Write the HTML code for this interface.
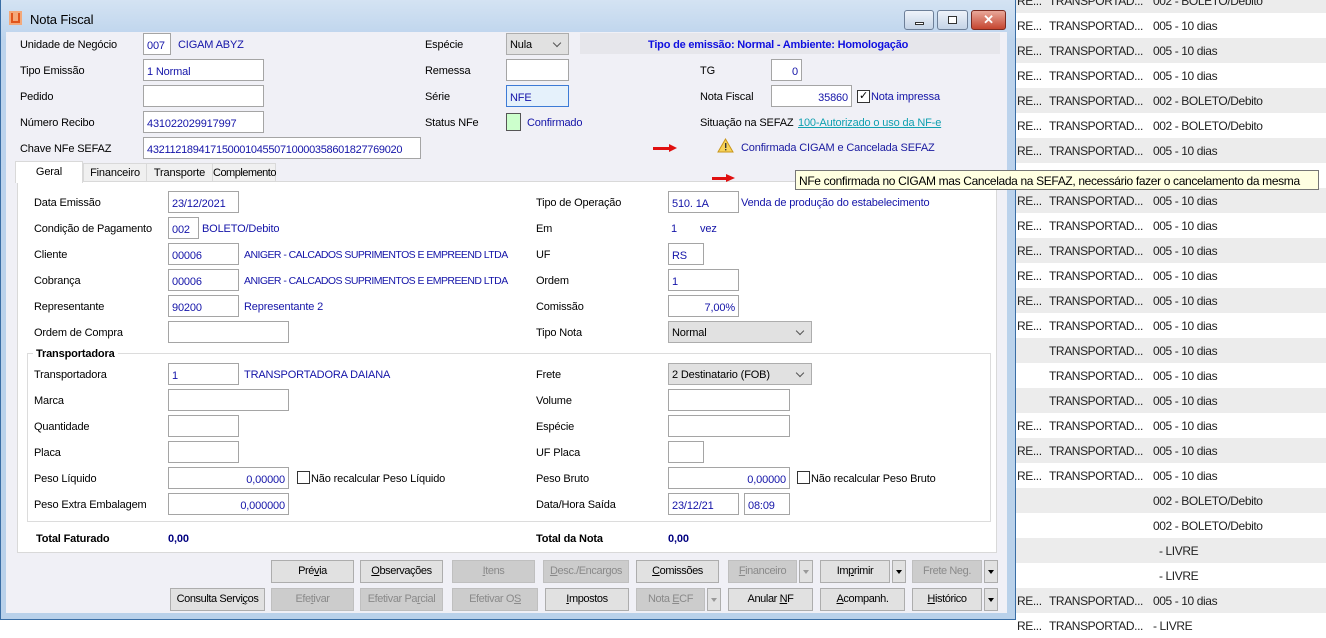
<!DOCTYPE html>
<html><head><meta charset="utf-8"><style>
*{box-sizing:border-box;margin:0;padding:0}
body{width:1326px;height:624px;overflow:hidden;background:#fff;font-family:"Liberation Sans",sans-serif;font-size:11px;color:#000;position:relative;letter-spacing:-0.15px}
.a{position:absolute;white-space:nowrap}
.row{position:absolute;left:1015px;width:311px;height:25px}
.g{background:#ececec}
.t{position:absolute;font-size:12px;color:#222;top:6px;letter-spacing:-0.4px}
.l{position:absolute;white-space:nowrap;line-height:14px;margin-top:1px}
.i{position:absolute;background:#fff;border:1px solid #a5a5a5;height:22px;color:#1414a8;padding:6px 3px 0 3px;line-height:13px;white-space:nowrap}
.r{text-align:right}
.b{color:#1414a8}
.n{letter-spacing:-0.55px}
.sel{position:absolute;background:#e1e1e1;border:1px solid #adadad;height:22px;padding:5px 3px;line-height:13px}
.sel:after{content:"";position:absolute;right:8px;top:6px;width:5px;height:5px;border-right:1px solid #555;border-bottom:1px solid #555;transform:rotate(45deg)}
.btn{position:absolute;height:23px;background:#e1e1e1;border:1px solid #adadad;text-align:center;line-height:21px;letter-spacing:-0.4px}
.dis{background:#cccccc;border-color:#bfbfbf;color:#8a8a8a}
.arr{position:absolute;height:23px;width:14px;background:#e1e1e1;border:1px solid #adadad}
.arr:after{content:"";position:absolute;left:3px;top:9px;border-left:3px solid transparent;border-right:3px solid transparent;border-top:4px solid #000}
.arr.dis:after{border-top-color:#999}
.cb{position:absolute;width:13px;height:13px;border:1px solid #333;background:#fff}
</style></head><body>
<!-- background list -->
<div class="row g" style="top:-12px"><span class="t" style="left:2px">RE...</span><span class="t" style="left:34px">TRANSPORTAD...</span><span class="t" style="left:138px">002 - BOLETO/Debito</span></div>
<div class="row" style="top:13px"><span class="t" style="left:2px">RE...</span><span class="t" style="left:34px">TRANSPORTAD...</span><span class="t" style="left:138px">005 - 10 dias</span></div>
<div class="row g" style="top:38px"><span class="t" style="left:2px">RE...</span><span class="t" style="left:34px">TRANSPORTAD...</span><span class="t" style="left:138px">005 - 10 dias</span></div>
<div class="row" style="top:63px"><span class="t" style="left:2px">RE...</span><span class="t" style="left:34px">TRANSPORTAD...</span><span class="t" style="left:138px">005 - 10 dias</span></div>
<div class="row g" style="top:88px"><span class="t" style="left:2px">RE...</span><span class="t" style="left:34px">TRANSPORTAD...</span><span class="t" style="left:138px">002 - BOLETO/Debito</span></div>
<div class="row" style="top:113px"><span class="t" style="left:2px">RE...</span><span class="t" style="left:34px">TRANSPORTAD...</span><span class="t" style="left:138px">002 - BOLETO/Debito</span></div>
<div class="row g" style="top:138px"><span class="t" style="left:2px">RE...</span><span class="t" style="left:34px">TRANSPORTAD...</span><span class="t" style="left:138px">005 - 10 dias</span></div>
<div class="row" style="top:163px"></div>
<div class="row g" style="top:188px"><span class="t" style="left:2px">RE...</span><span class="t" style="left:34px">TRANSPORTAD...</span><span class="t" style="left:138px">005 - 10 dias</span></div>
<div class="row" style="top:213px"><span class="t" style="left:2px">RE...</span><span class="t" style="left:34px">TRANSPORTAD...</span><span class="t" style="left:138px">005 - 10 dias</span></div>
<div class="row g" style="top:238px"><span class="t" style="left:2px">RE...</span><span class="t" style="left:34px">TRANSPORTAD...</span><span class="t" style="left:138px">005 - 10 dias</span></div>
<div class="row" style="top:263px"><span class="t" style="left:2px">RE...</span><span class="t" style="left:34px">TRANSPORTAD...</span><span class="t" style="left:138px">005 - 10 dias</span></div>
<div class="row g" style="top:288px"><span class="t" style="left:2px">RE...</span><span class="t" style="left:34px">TRANSPORTAD...</span><span class="t" style="left:138px">005 - 10 dias</span></div>
<div class="row" style="top:313px"><span class="t" style="left:2px">RE...</span><span class="t" style="left:34px">TRANSPORTAD...</span><span class="t" style="left:138px">005 - 10 dias</span></div>
<div class="row g" style="top:338px"><span class="t" style="left:34px">TRANSPORTAD...</span><span class="t" style="left:138px">005 - 10 dias</span></div>
<div class="row" style="top:363px"><span class="t" style="left:34px">TRANSPORTAD...</span><span class="t" style="left:138px">005 - 10 dias</span></div>
<div class="row g" style="top:388px"><span class="t" style="left:34px">TRANSPORTAD...</span><span class="t" style="left:138px">005 - 10 dias</span></div>
<div class="row" style="top:413px"><span class="t" style="left:2px">RE...</span><span class="t" style="left:34px">TRANSPORTAD...</span><span class="t" style="left:138px">005 - 10 dias</span></div>
<div class="row g" style="top:438px"><span class="t" style="left:2px">RE...</span><span class="t" style="left:34px">TRANSPORTAD...</span><span class="t" style="left:138px">005 - 10 dias</span></div>
<div class="row" style="top:463px"><span class="t" style="left:2px">RE...</span><span class="t" style="left:34px">TRANSPORTAD...</span><span class="t" style="left:138px">005 - 10 dias</span></div>
<div class="row g" style="top:488px"><span class="t" style="left:138px">002 - BOLETO/Debito</span></div>
<div class="row" style="top:513px"><span class="t" style="left:138px">002 - BOLETO/Debito</span></div>
<div class="row g" style="top:538px"><span class="t" style="left:144px">- LIVRE</span></div>
<div class="row" style="top:563px"><span class="t" style="left:144px">- LIVRE</span></div>
<div class="row g" style="top:588px"><span class="t" style="left:2px">RE...</span><span class="t" style="left:34px">TRANSPORTAD...</span><span class="t" style="left:138px">005 - 10 dias</span></div>
<div class="row" style="top:613px"><span class="t" style="left:2px">RE...</span><span class="t" style="left:34px">TRANSPORTAD...</span><span class="t" style="left:138px">- LIVRE</span></div>
<div class="a" style="left:0;top:619px;width:1015px;height:5px;background:#fff;border-top:1px solid #222"></div>

<!-- window -->
<div class="a" style="left:0;top:0;width:1016px;height:620px;background:linear-gradient(#d4e3f3,#bcd3ec 40px,#b9d1ea);border:1px solid #3a6ea5;border-top:none"></div>
<div class="a" style="left:9px;top:11px;width:13px;height:14px;background:#f3a87a"></div>
<div class="a" style="left:11px;top:13px;width:9px;height:10px;border:2px solid #e0541c;border-top:none"></div>
<div class="a" style="left:30px;top:12px;font-size:13px;color:#000">Nota Fiscal</div>
<div class="a" style="left:904px;top:10px;width:30px;height:20px;border:1px solid #6d7f98;border-radius:3px;background:linear-gradient(#eef3fa,#c4d3e6)"><div class="a" style="left:10px;top:11px;width:9px;height:3px;border:1px solid #333;background:#fff"></div></div>
<div class="a" style="left:937px;top:10px;width:31px;height:20px;border:1px solid #6d7f98;border-radius:3px;background:linear-gradient(#eef3fa,#c4d3e6)"><div class="a" style="left:10px;top:5px;width:9px;height:8px;border:1px solid #333;background:#fff"></div></div>
<div class="a" style="left:971px;top:10px;width:35px;height:20px;border:1px solid #7a2a20;border-radius:3px;background:linear-gradient(#e9a89a,#c5452f);color:#fff;font-weight:bold;font-size:13px;text-align:center;line-height:18px">✕</div>

<div class="a" style="left:6px;top:32px;width:1001px;height:581px;background:#f0f0f6"></div>
<!-- header -->
<span class="l" style="left:20px;top:37px">Unidade de Negócio</span>
<div class="i" style="left:143px;top:33px;width:28px">007</div><span class="l b" style="left:178px;top:37px">CIGAM ABYZ</span>
<span class="l" style="left:20px;top:63px">Tipo Emissão</span>
<div class="i" style="left:143px;top:59px;width:121px">1 Normal</div>
<span class="l" style="left:20px;top:89px">Pedido</span>
<div class="i" style="left:143px;top:85px;width:121px"></div>
<span class="l" style="left:20px;top:115px">Número Recibo</span>
<div class="i" style="left:143px;top:111px;width:121px">431022029917997</div>
<span class="l" style="left:20px;top:141px">Chave NFe SEFAZ</span>
<div class="i" style="left:143px;top:137px;width:278px;letter-spacing:-0.3px">43211218941715000104550710000358601827769020</div>

<span class="l" style="left:425px;top:37px">Espécie</span>
<div class="sel" style="left:506px;top:33px;width:63px">Nula</div>
<span class="l" style="left:425px;top:63px">Remessa</span>
<div class="i" style="left:506px;top:59px;width:63px"></div>
<span class="l" style="left:425px;top:89px">Série</span>
<div class="i" style="left:506px;top:85px;width:63px;background:#e5f1fb;border-color:#3d7bd6;color:#1414a8">NFE</div>
<span class="l" style="left:425px;top:115px">Status NFe</span>
<div class="a" style="left:506px;top:113px;width:15px;height:18px;background:#ccffcc;border:1px solid #555"></div>
<span class="l b" style="left:527px;top:115px">Confirmado</span>

<div class="a" style="left:580px;top:33px;width:420px;height:21px;background:#e6e6eb"></div>
<span class="l" style="left:648px;top:37px;color:#1010e0;font-weight:bold;letter-spacing:-0.2px">Tipo de emissão: Normal - Ambiente: Homologação</span>
<span class="l" style="left:700px;top:63px">TG</span>
<div class="i r" style="left:771px;top:59px;width:31px">0</div>
<span class="l" style="left:700px;top:89px">Nota Fiscal</span>
<div class="i r" style="left:771px;top:85px;width:81px">35860</div>
<div class="cb" style="left:857px;top:90px;text-align:center;line-height:10px;font-size:11px">✓</div>
<span class="l b" style="left:871px;top:89px">Nota impressa</span>
<span class="l" style="left:700px;top:115px">Situação na SEFAZ</span>
<span class="l" style="left:798px;top:115px;color:#10a0b0;text-decoration:underline">100-Autorizado o uso da NF-e</span>
<div class="a" style="left:653px;top:147px;width:18px;height:3px;background:#e01010"></div>
<div class="a" style="left:669px;top:144px;border-left:8px solid #e01010;border-top:4px solid transparent;border-bottom:4px solid transparent"></div>
<svg class="a" style="left:717px;top:138px" width="17" height="15"><path d="M8.5 1 L16 14 L1 14 Z" fill="#f7d35a" stroke="#c9961a"/><rect x="8" y="5" width="1.4" height="5" fill="#333"/><rect x="8" y="11" width="1.4" height="1.4" fill="#333"/></svg>
<span class="l" style="left:741px;top:140px;color:#1a1aa0">Confirmada CIGAM e Cancelada SEFAZ</span>

<!-- tabs -->
<div class="a" style="left:17px;top:181px;width:980px;height:372px;background:#fff;border:1px solid #d9d9d9"></div>
<div class="a" style="left:83px;top:163px;width:64px;height:19px;background:#f0f0f0;border:1px solid #d9d9d9;text-align:center;line-height:18px">Financeiro</div>
<div class="a" style="left:146px;top:163px;width:67px;height:19px;background:#f0f0f0;border:1px solid #d9d9d9;text-align:center;line-height:18px">Transporte</div>
<div class="a" style="left:212px;top:163px;width:64px;height:19px;background:#f0f0f0;border:1px solid #d9d9d9;text-align:center;line-height:18px;letter-spacing:-0.5px">Complemento</div>
<div class="a" style="left:15px;top:161px;width:68px;height:22px;background:#fff;border:1px solid #d9d9d9;border-bottom:none;text-align:center;line-height:20px">Geral</div>

<!-- left form -->
<span class="l" style="left:34px;top:195px">Data Emissão</span><div class="i" style="left:168px;top:191px;width:71px">23/12/2021</div>
<span class="l" style="left:34px;top:221px">Condição de Pagamento</span><div class="i" style="left:168px;top:217px;width:31px">002</div><span class="l b" style="left:202px;top:221px">BOLETO/Debito</span>
<span class="l" style="left:34px;top:247px">Cliente</span><div class="i" style="left:168px;top:243px;width:71px">00006</div><span class="l b n" style="left:244px;top:247px;font-size:10.5px">ANIGER - CALCADOS SUPRIMENTOS E EMPREEND LTDA</span>
<span class="l" style="left:34px;top:273px">Cobrança</span><div class="i" style="left:168px;top:269px;width:71px">00006</div><span class="l b n" style="left:244px;top:273px;font-size:10.5px">ANIGER - CALCADOS SUPRIMENTOS E EMPREEND LTDA</span>
<span class="l" style="left:34px;top:299px">Representante</span><div class="i" style="left:168px;top:295px;width:71px">90200</div><span class="l b" style="left:244px;top:299px">Representante 2</span>
<span class="l" style="left:34px;top:325px">Ordem de Compra</span><div class="i" style="left:168px;top:321px;width:121px"></div>

<span class="l" style="left:536px;top:195px">Tipo de Operação</span><div class="i" style="left:668px;top:191px;width:71px">510. 1A</div><span class="l b" style="left:741px;top:195px">Venda de produção do estabelecimento</span>
<span class="l" style="left:536px;top:221px">Em</span><span class="l b" style="left:671px;top:221px">1</span><span class="l b" style="left:700px;top:221px">vez</span>
<span class="l" style="left:536px;top:247px">UF</span><div class="i" style="left:668px;top:243px;width:36px">RS</div>
<span class="l" style="left:536px;top:273px">Ordem</span><div class="i" style="left:668px;top:269px;width:71px">1</div>
<span class="l" style="left:536px;top:299px">Comissão</span><div class="i r" style="left:668px;top:295px;width:71px">7,00%</div>
<span class="l" style="left:536px;top:325px">Tipo Nota</span><div class="sel" style="left:668px;top:321px;width:144px">Normal</div>

<!-- group -->
<div class="a" style="left:27px;top:353px;width:964px;height:169px;border:1px solid #dcdcdc"></div>
<span class="l" style="left:33px;top:346px;background:#fff;padding:0 3px;font-weight:bold">Transportadora</span>
<span class="l" style="left:34px;top:367px">Transportadora</span><div class="i" style="left:168px;top:363px;width:71px">1</div><span class="l b" style="left:244px;top:367px">TRANSPORTADORA DAIANA</span>
<span class="l" style="left:34px;top:393px">Marca</span><div class="i" style="left:168px;top:389px;width:121px"></div>
<span class="l" style="left:34px;top:419px">Quantidade</span><div class="i" style="left:168px;top:415px;width:71px"></div>
<span class="l" style="left:34px;top:445px">Placa</span><div class="i" style="left:168px;top:441px;width:71px"></div>
<span class="l" style="left:34px;top:471px">Peso Líquido</span><div class="i r" style="left:168px;top:467px;width:121px">0,00000</div><div class="cb" style="left:297px;top:471px"></div><span class="l" style="left:311px;top:471px">Não recalcular Peso Líquido</span>
<span class="l" style="left:34px;top:497px">Peso Extra Embalagem</span><div class="i r" style="left:168px;top:493px;width:121px">0,000000</div>

<span class="l" style="left:536px;top:367px">Frete</span><div class="sel" style="left:668px;top:363px;width:144px">2 Destinatario (FOB)</div>
<span class="l" style="left:536px;top:393px">Volume</span><div class="i" style="left:668px;top:389px;width:122px"></div>
<span class="l" style="left:536px;top:419px">Espécie</span><div class="i" style="left:668px;top:415px;width:122px"></div>
<span class="l" style="left:536px;top:445px">UF Placa</span><div class="i" style="left:668px;top:441px;width:36px"></div>
<span class="l" style="left:536px;top:471px">Peso Bruto</span><div class="i r" style="left:668px;top:467px;width:122px">0,00000</div><div class="cb" style="left:797px;top:471px"></div><span class="l" style="left:811px;top:471px">Não recalcular Peso Bruto</span>
<span class="l" style="left:536px;top:497px">Data/Hora Saída</span><div class="i" style="left:668px;top:493px;width:71px">23/12/21</div><div class="i" style="left:744px;top:493px;width:46px">08:09</div>

<span class="l" style="left:36px;top:531px;font-weight:bold">Total Faturado</span><span class="l" style="left:168px;top:531px;font-weight:bold;color:#000080">0,00</span>
<span class="l" style="left:536px;top:531px;font-weight:bold">Total da Nota</span><span class="l" style="left:668px;top:531px;font-weight:bold;color:#000080">0,00</span>

<!-- buttons -->
<div class="btn" style="left:271px;top:560px;width:83px">Pré<u>v</u>ia</div>
<div class="btn" style="left:360px;top:560px;width:83px"><u>O</u>bservações</div>
<div class="btn dis" style="left:452px;top:560px;width:83px"><u>I</u>tens</div>
<div class="btn dis" style="left:543px;top:560px;width:86px"><u>D</u>esc./Encargos</div>
<div class="btn" style="left:636px;top:560px;width:83px"><u>C</u>omissões</div>
<div class="btn dis" style="left:728px;top:560px;width:69px"><u>F</u>inanceiro</div><div class="arr dis" style="left:799px;top:560px"></div>
<div class="btn" style="left:820px;top:560px;width:70px">Im<u>p</u>rimir</div><div class="arr" style="left:892px;top:560px"></div>
<div class="btn dis" style="left:912px;top:560px;width:70px">Frete Neg.</div><div class="arr" style="left:984px;top:560px"></div>
<div class="btn" style="left:170px;top:588px;width:95px">Consulta Servi<u>ç</u>os</div>
<div class="btn dis" style="left:271px;top:588px;width:83px">Efe<u>t</u>ivar</div>
<div class="btn dis" style="left:360px;top:588px;width:83px">Efetivar Pa<u>r</u>cial</div>
<div class="btn dis" style="left:452px;top:588px;width:86px">Efetivar O<u>S</u></div>
<div class="btn" style="left:545px;top:588px;width:84px"><u>I</u>mpostos</div>
<div class="btn dis" style="left:636px;top:588px;width:69px">Nota <u>E</u>CF</div><div class="arr dis" style="left:707px;top:588px"></div>
<div class="btn" style="left:728px;top:588px;width:85px">Anular <u>N</u>F</div>
<div class="btn" style="left:820px;top:588px;width:85px"><u>A</u>companh.</div>
<div class="btn" style="left:912px;top:588px;width:70px"><u>H</u>istórico</div><div class="arr" style="left:984px;top:588px"></div>

<!-- tooltip -->
<div class="a" style="left:712px;top:177px;width:16px;height:3px;background:#e01010"></div>
<div class="a" style="left:726px;top:174px;border-left:9px solid #e01010;border-top:4px solid transparent;border-bottom:4px solid transparent"></div>
<div class="a" style="left:795px;top:170px;width:524px;height:20px;background:#ffffe1;border:1px solid #767676;padding:3px 3px;font-size:12px;letter-spacing:-0.35px">NFe confirmada no CIGAM mas Cancelada na SEFAZ, necessário fazer o cancelamento da mesma</div>
</body></html>
